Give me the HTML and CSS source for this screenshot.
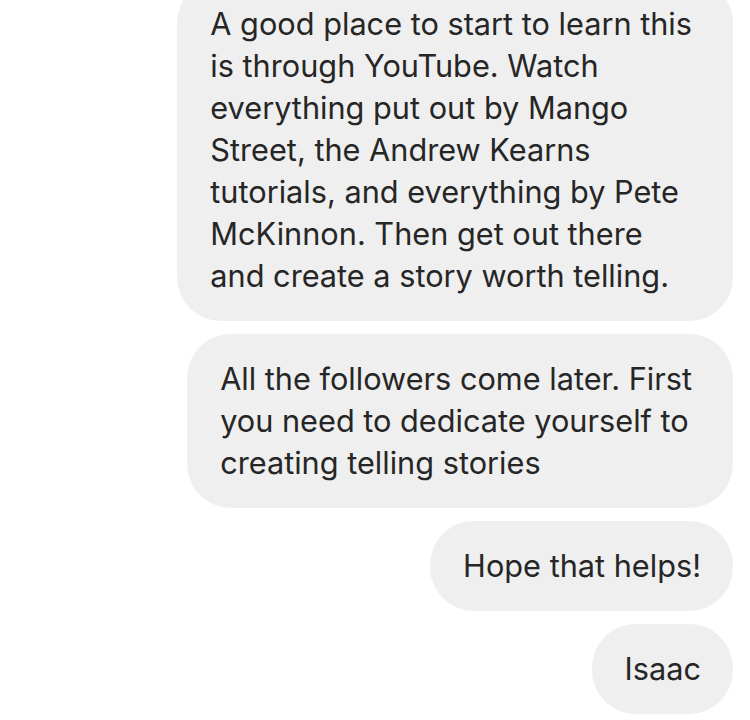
FILE: index.html
```html
<!DOCTYPE html>
<html lang="en">
<head>
    <meta charset="UTF-8">
    <meta name="viewport" content="width=device-width, initial-scale=1.0">
    <title>Messages</title>
    <link rel="stylesheet" href="styles.css">
</head>
<body>

    <!-- Message thread, newest at the bottom -->
    <div class="thread">
        <div class="bubble multi">
            A good place to start to learn this<br>
            is through YouTube. Watch<br>
            everything put out by Mango<br>
            Street, the Andrew Kearns<br>
            tutorials, and everything by Pete<br>
            McKinnon. Then get out there<br>
            and create a story worth telling.
        </div>
        <div class="bubble multi">
            All the followers come later. First<br>
            you need to dedicate yourself to<br>
            creating telling stories
        </div>
        <div class="bubble">Hope that helps!</div>
        <div class="bubble">Isaac</div>
    </div>

</body>
</html>
```

FILE: styles.css
```css
body {
    margin: 0;
    background-color: #fff;
    font-family: Inter, "Noto Sans", sans-serif;
}
/* Thread */
.thread {
    height: 100vh;
    box-sizing: border-box;
    display: flex;
    flex-direction: column;
    justify-content: flex-end;
    align-items: flex-end;
    gap: 13px;
    padding: 0 17px 6px 0;
    overflow: hidden;
}
/* Message bubble */
.bubble {
    background-color: #efefef;
    color: #262626;
    font-size: 30.7px;
    line-height: 42px;
    padding: 24px 32px 24px 33px;
    border-radius: 44px;
    white-space: nowrap;
    flex-shrink: 0;
}
/* Wrapped bubbles keep some slack on the right */
.bubble.multi {
    padding-right: 41px;
}
```
